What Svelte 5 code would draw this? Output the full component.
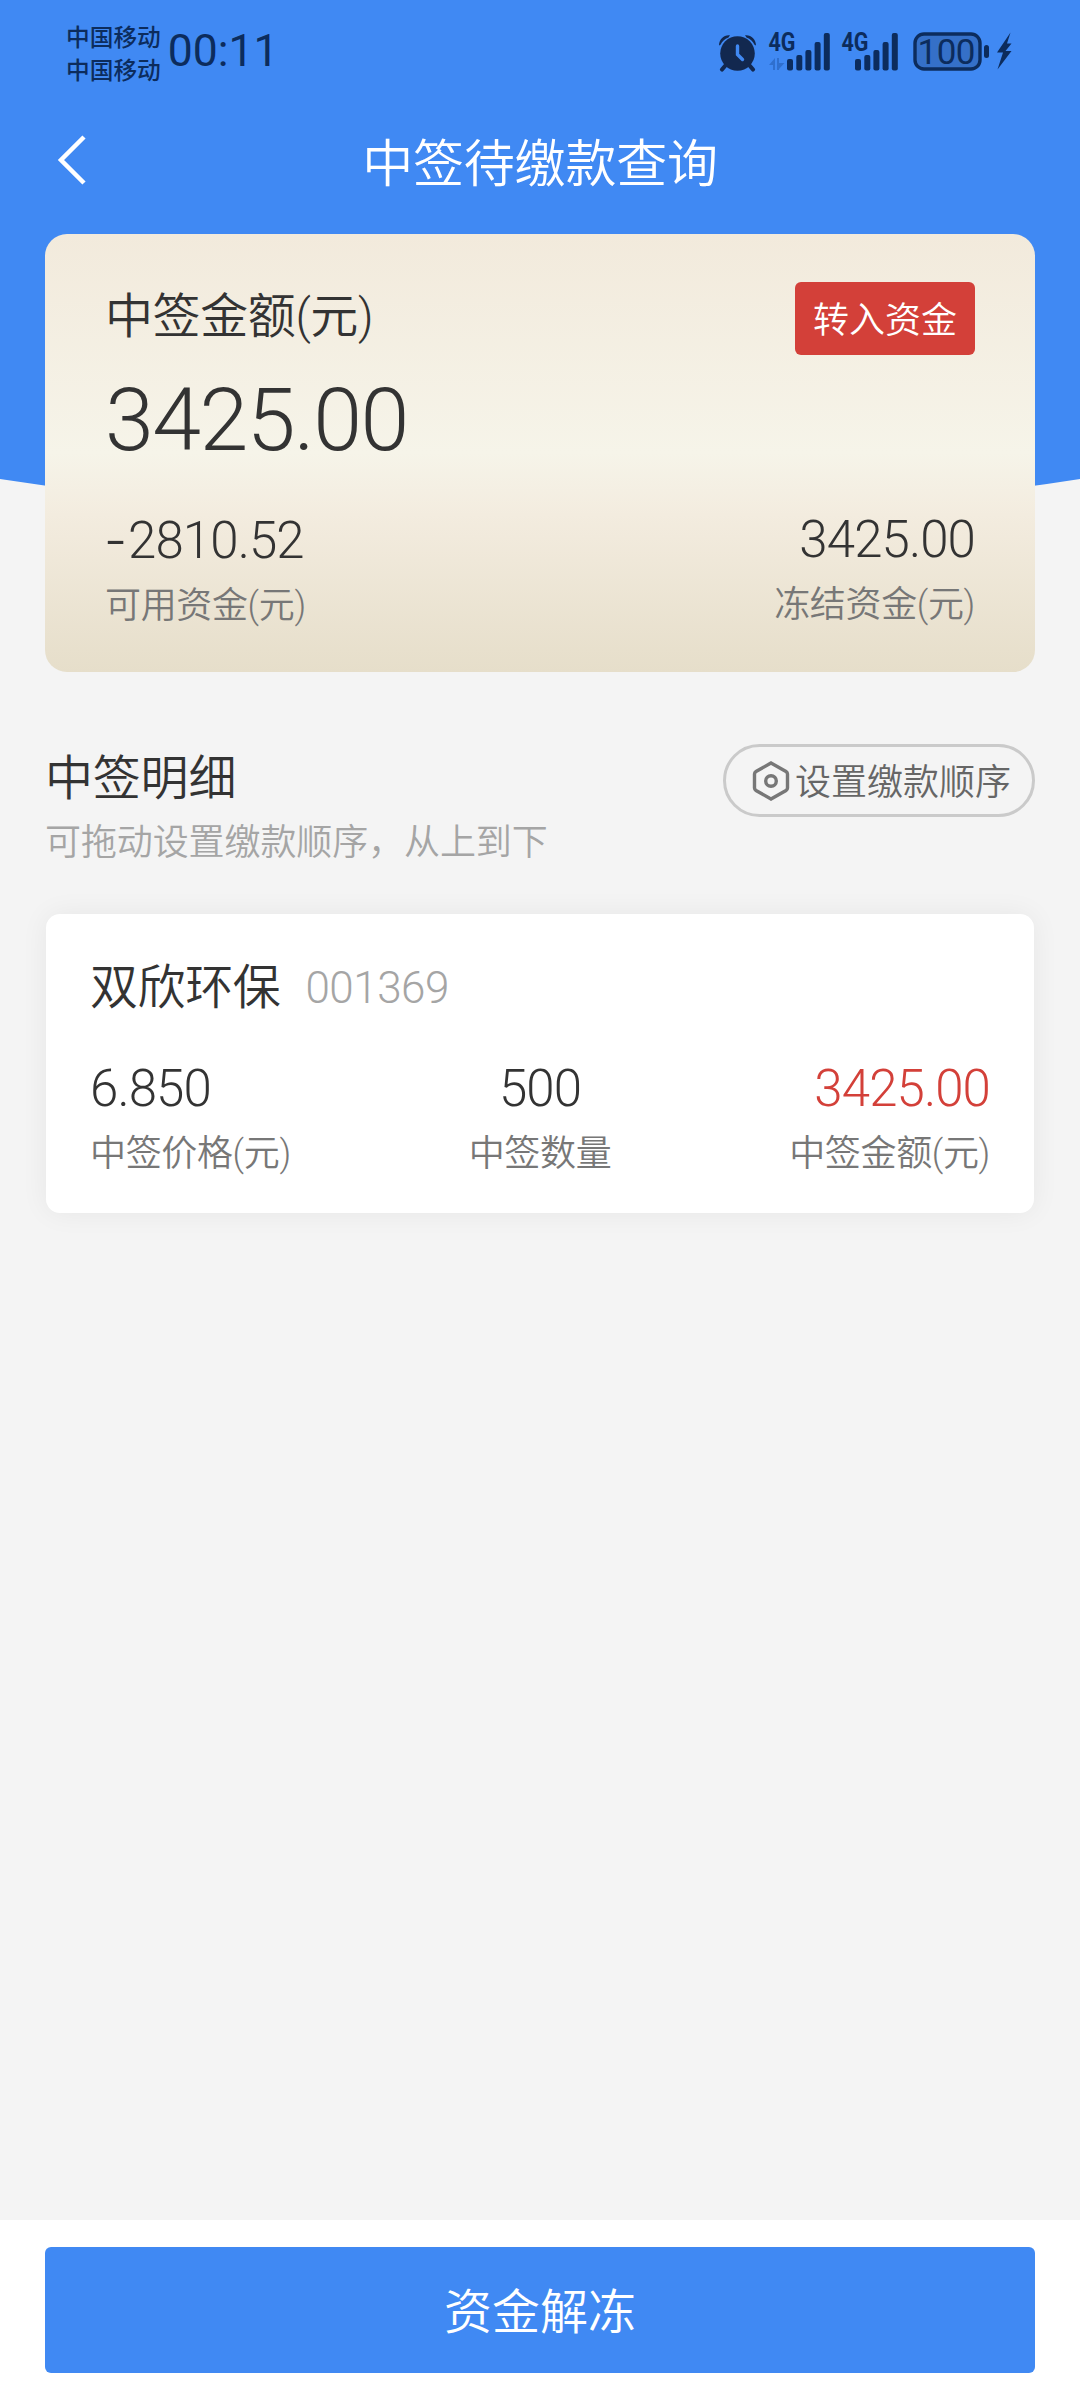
<script lang="ts">
  const carriers = ['中国移动', '中国移动'];

  const summary = {
    total: '3425.00',
    available: '2810.52',
    frozen: '3425.00',
  };

  const items = [
    { name: '双欣环保', code: '001369', price: '6.850', count: '500', amount: '3425.00' },
  ];

  // signal bars: x offset and top edge, all share the same baseline
  const bars = [
    [0, 58],
    [9.3, 54],
    [18.4, 49],
    [27.6, 41],
    [36.8, 32],
  ];
  const signals = [787, 855];
</script>

<div class="screen">
  <div class="hero">
    <div class="statusbar">
      <div class="carriers">
        {#each carriers as carrier}
          <span>{carrier}</span>
        {/each}
      </div>
      <span class="time">00:11</span>
      <svg class="indicators" width="300" height="48" viewBox="716 26 300 48">
        <g fill="#12284f">
          <circle cx="737.5" cy="52.5" r="17.3" />
          <path d="M725 65l-3 3.500M750 65l3 3.500" stroke="#12284f" stroke-width="4.200" stroke-linecap="round" />
          <path d="M719 44.500C719 38 724 33.500 730 34.200L728.500 36.500C724.500 38 722 40.500 720.500 43.800ZM756 44.500C756 38 751 33.500 745 34.200L746.500 36.500C750.500 38 753 40.500 754.500 43.800Z" />
        </g>
        <path d="M737.500 45v8.500l5 5" fill="none" stroke="#4089f3" stroke-width="3.400" stroke-linecap="round" />

        <g fill="#0c2c5d">
          {#each signals as left}
            {#each bars as [dx, top]}
              <rect x={left + dx} y={top} width="6" height={69.5 - top} rx="2" />
            {/each}
          {/each}
          <text class="net" x="768.500" y="50" textLength="27" lengthAdjust="spacingAndGlyphs">4G</text>
          <text class="net" x="841.500" y="50" textLength="27" lengthAdjust="spacingAndGlyphs">4G</text>
        </g>
        <path d="M769 64l6-7v12h-2v-5ZM777 57h2v5h5.500l-5.500 6v1h-2Z" fill="#2f6fce" />

        <rect x="915" y="33" width="65" height="35" rx="9" fill="#3570c8" stroke="#0c2c5d" stroke-width="3.400" />
        <text class="level" x="917.500" y="62.500" textLength="58" lengthAdjust="spacing">100</text>
        <rect x="984" y="44" width="5" height="13" rx="2.500" fill="#0c2c5d" />
        <path d="M1010.500 31.500L997 51.500H1003L997.500 68.500L1011.500 50H1005.500L1011.500 42.500H1007Z" fill="#0c2c5d" />
      </svg>
    </div>
    <header class="navbar">
      <svg class="back" width="32" height="52" viewBox="0 0 32 52">
        <path d="M27 3L4 26L27 49" />
      </svg>
      <h1>中签待缴款查询</h1>
    </header>
  </div>

  <section class="summary">
    <div class="summary-head">
      <span class="title">中签金额(元)</span>
      <button class="transfer">转入资金</button>
    </div>
    <div class="total">{summary.total}</div>
    <div class="funds">
      <div class="cell">
        <span class="num"><span class="sign">-</span>{summary.available}</span>
        <span class="label">可用资金(元)</span>
      </div>
      <div class="cell right">
        <span class="num">{summary.frozen}</span>
        <span class="label">冻结资金(元)</span>
      </div>
    </div>
  </section>

  <section class="detail-head">
    <div class="detail-text">
      <h2>中签明细</h2>
      <p>可拖动设置缴款顺序，从上到下</p>
    </div>
    <button class="order">
      <svg width="38" height="42" viewBox="0 0 38 42">
        <path d="M19 3L34 11.500Q35.500 12.500 35.500 14V28Q35.500 29.500 34 30.500L19 39L4 30.500Q2.500 29.500 2.500 28V14Q2.500 12.500 4 11.500Z" />
        <circle cx="19" cy="21" r="5.300" />
      </svg>
      <span>设置缴款顺序</span>
    </button>
  </section>

  <main>
    {#each items as item}
      <article class="stock">
        <div class="stock-head">
          <span class="title">{item.name}</span>
          <span class="code">{item.code}</span>
        </div>
        <div class="stock-body">
          <div class="cell">
            <span class="num">{item.price}</span>
            <span class="label">中签价格(元)</span>
          </div>
          <div class="cell center">
            <span class="num">{item.count}</span>
            <span class="label">中签数量</span>
          </div>
          <div class="cell right">
            <span class="num red">{item.amount}</span>
            <span class="label">中签金额(元)</span>
          </div>
        </div>
      </article>
    {/each}
  </main>

  <footer>
    <button class="unfreeze">资金解冻</button>
  </footer>
</div>

<style>
  :global(body) {
    background: #f4f4f4;
  }

  .screen {
    display: flex;
    flex-direction: column;
    width: 1080px;
    height: 2400px;
    overflow: hidden;
    background: #f4f4f4;
    color: #333;
    font-family: Roboto, "Noto Sans CJK SC", sans-serif;
    font-weight: 350;
  }

  h1,
  h2,
  p {
    margin: 0;
    font-weight: 350;
  }

  button {
    box-sizing: border-box;
    padding: 0;
    border: none;
    font: inherit;
  }

  .hero {
    flex: none;
    height: 514px;
    margin-bottom: -280px;
    background: #4089f3;
    clip-path: path("M0 0H1080V479Q540 563 0 479Z");
  }

  .statusbar {
    display: flex;
    align-items: center;
    height: 102px;
    padding: 0 64px 0 66px;
    color: #0c2c5d;
  }

  .carriers {
    display: flex;
    flex-direction: column;
    padding-top: 3px;
    font-family: "Noto Sans CJK SC", sans-serif;
    font-size: 23.7px;
    font-weight: 500;
    line-height: 33px;
  }

  .time {
    margin-left: 7px;
    font-size: 44.5px;
    font-weight: 400;
    line-height: 50px;
  }

  .indicators {
    margin-left: auto;
  }

  .net {
    font-size: 25px;
    font-weight: 700;
  }

  .level {
    fill: #0c2c5d;
    font-size: 35px;
    font-weight: 400;
  }

  .navbar {
    display: grid;
    grid-template-columns: 90px 1fr 90px;
    align-items: center;
    height: 116px;
  }

  .back {
    margin-left: 57px;
    fill: none;
    stroke: #fff;
    stroke-width: 4.5;
  }

  .navbar h1 {
    padding-top: 9px;
    color: #fff;
    font-size: 51px;
    line-height: 72px;
    letter-spacing: -0.2px;
    text-align: center;
  }

  .summary {
    position: relative;
    flex: none;
    box-sizing: border-box;
    height: 438px;
    margin: 0 45px;
    padding: 48px 60px 0;
    border-radius: 22px;
    background: linear-gradient(#f2eadc, #f6f4e9 50%, #f3ecdf 64%, #e6deca);
  }

  .summary-head {
    display: flex;
    justify-content: space-between;
    height: 73px;
  }

  .title {
    font-size: 48px;
    line-height: 70px;
    letter-spacing: -0.4px;
  }

  .transfer {
    width: 180px;
    height: 73px;
    padding-bottom: 3px;
    border-radius: 6px;
    background: #d34039;
    color: #fff;
    font-size: 36px;
  }

  .total {
    margin-top: 15px;
    font-size: 88px;
    line-height: 100px;
    letter-spacing: -1.6px;
  }

  .funds {
    display: flex;
    justify-content: space-between;
    margin-top: 37px;
  }

  .cell {
    display: flex;
    flex-direction: column;
  }

  .center {
    align-items: center;
  }

  .right {
    align-items: flex-end;
  }

  .num {
    font-size: 51px;
    line-height: 65px;
    letter-spacing: -0.9px;
  }

  .sign {
    margin-left: -1px;
    font-family: Inter, sans-serif;
    font-weight: 300;
    letter-spacing: 1px;
  }

  .red {
    color: #d34039;
  }

  .label {
    color: #777;
    font-size: 36px;
    line-height: 67px;
    letter-spacing: -0.35px;
  }

  .detail-head {
    display: flex;
    flex: none;
    justify-content: space-between;
    height: 242px;
    padding: 0 45px;
  }

  .detail-text {
    padding-top: 72px;
  }

  .detail-text h2 {
    font-size: 48px;
    line-height: 70px;
    letter-spacing: -0.2px;
  }

  .detail-text p {
    color: #a5a5a5;
    font-size: 36px;
    line-height: 58px;
    letter-spacing: -0.1px;
  }

  .order {
    display: flex;
    align-items: center;
    width: 312px;
    height: 73px;
    margin-top: 72px;
    padding-left: 26px;
    border: 3px solid #cacaca;
    border-radius: 37px;
    background: none;
    color: #666;
    font-size: 36px;
  }

  .order svg {
    margin-right: 5px;
    fill: none;
    stroke: #777;
    stroke-width: 3.4;
  }

  .order span {
    padding-bottom: 3px;
  }

  main {
    flex: 1;
    padding: 0 46px;
  }

  .stock {
    box-sizing: border-box;
    height: 299px;
    padding: 41px 44px 0;
    border-radius: 14px;
    background: #fff;
    box-shadow: 0 0 28px rgba(0, 0, 0, 0.06);
  }

  .stock-head {
    display: flex;
    align-items: center;
    height: 66px;
  }

  .code {
    margin-left: 25px;
    color: #a5a5a5;
    font-size: 44px;
    letter-spacing: -0.5px;
  }

  .stock-body {
    display: grid;
    grid-template-columns: 1fr 1fr 1fr;
    margin-top: 35px;
  }

  footer {
    flex: none;
    box-sizing: border-box;
    height: 180px;
    padding: 27px 45px 0;
    background: #fff;
  }

  .unfreeze {
    width: 100%;
    height: 126px;
    padding-bottom: 5px;
    border-radius: 6px;
    background: #4089f3;
    color: #fff;
    font-size: 48px;
  }
</style>
